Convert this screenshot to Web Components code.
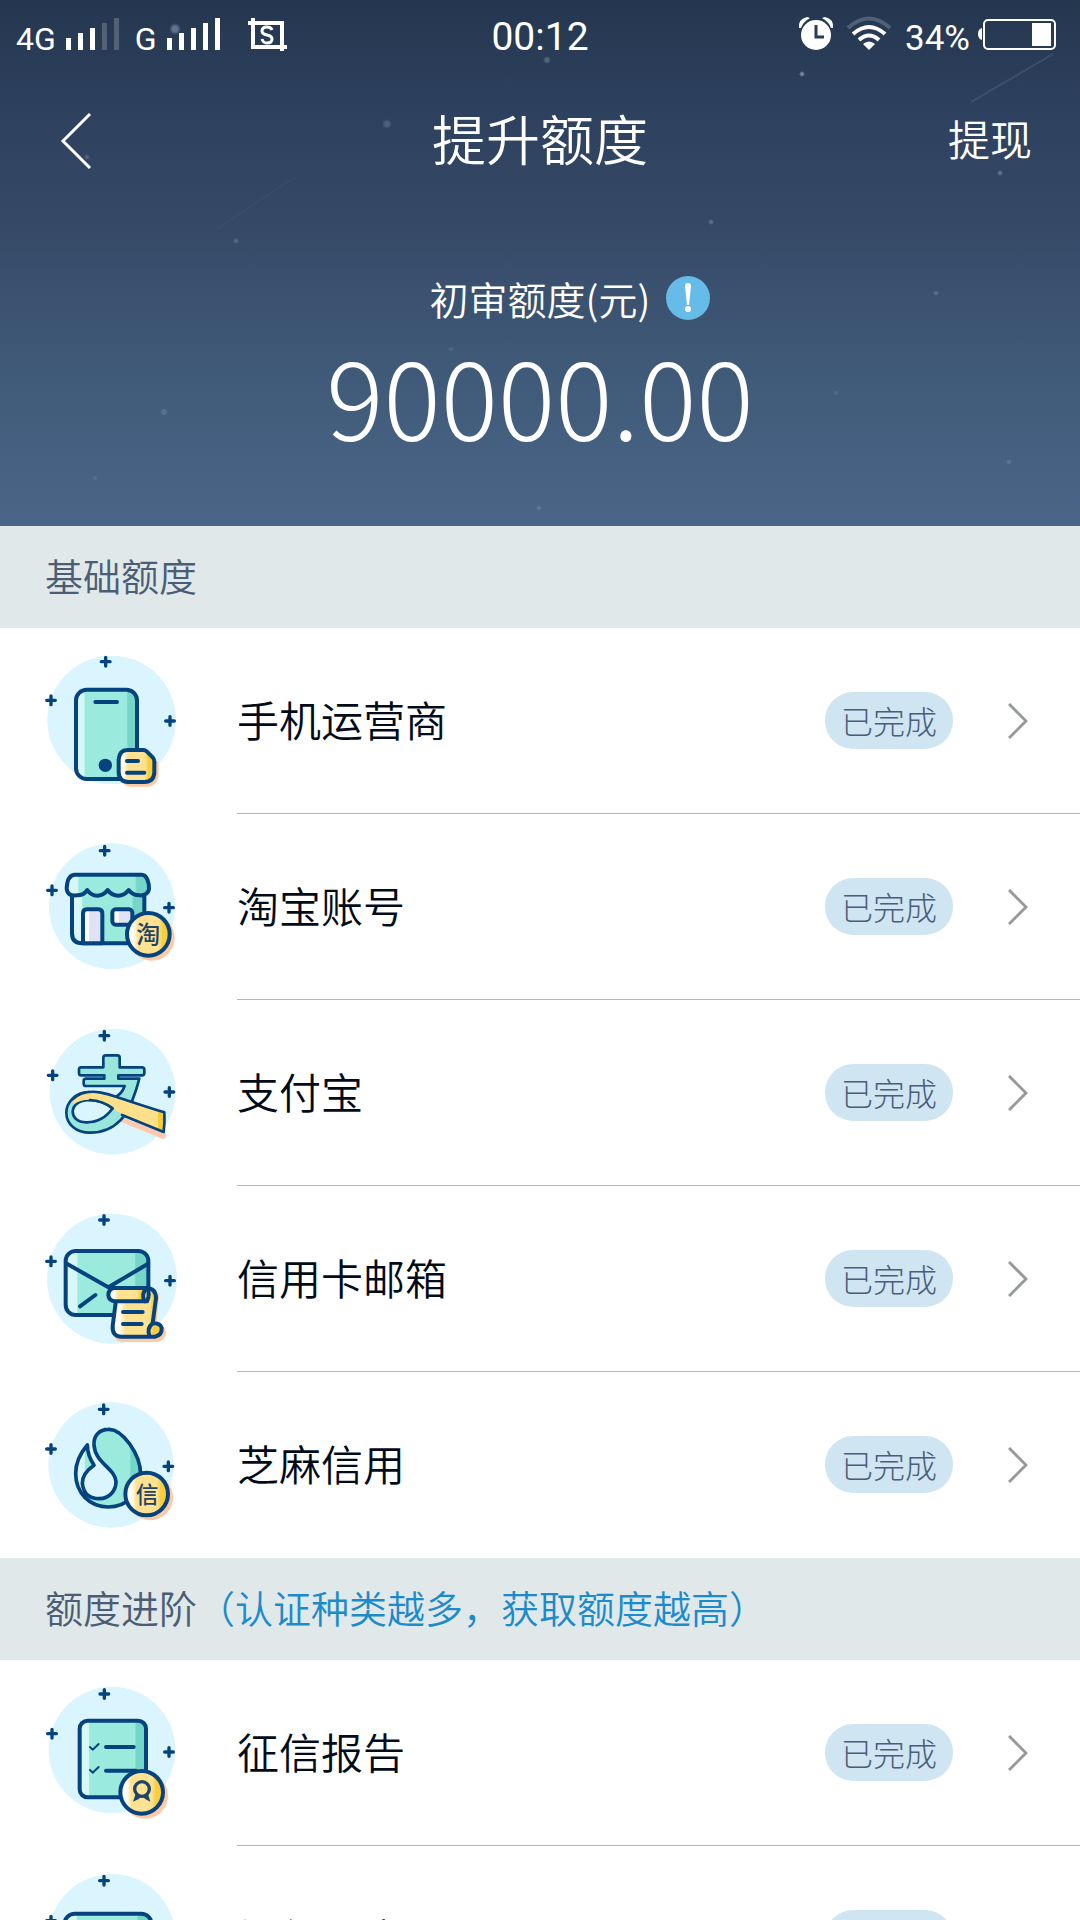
<!DOCTYPE html>
<html lang="zh-CN">
<head>
<meta charset="utf-8">
<meta name="viewport" content="width=device-width, initial-scale=1">
<title>提升额度</title>
<style>
    body {
        margin: 0;
        background: #fff;
        color: #020b18;
        font-family: "Noto Sans CJK SC", sans-serif;
        font-weight: 350;
    }
</style>
</head>
<body>
<quota-app>
    <status-bar slot="top" time="00:12" battery="34%"></status-bar>
    <nav-bar slot="top" heading="提升额度"><a slot="action" href="#withdraw">提现</a></nav-bar>
    <quota-amount slot="top" label="初审额度(元)">90000.00</quota-amount>

    <quota-section heading="基础额度">
        <quota-item icon="phone" status="已完成">手机运营商</quota-item>
        <quota-item icon="shop" status="已完成">淘宝账号</quota-item>
        <quota-item icon="alipay" status="已完成">支付宝</quota-item>
        <quota-item icon="mail" status="已完成">信用卡邮箱</quota-item>
        <quota-item icon="sesame" status="已完成">芝麻信用</quota-item>
    </quota-section>
    <quota-section heading="额度进阶" note="（认证种类越多，获取额度越高）">
        <quota-item icon="report" status="已完成">征信报告</quota-item>
        <quota-item icon="card" status="已完成">银行账户</quota-item>
    </quota-section>
</quota-app>

<script>
// four-armed sparkle around the round icons
const spark = (x, y) => `<path d="M${x - 13} ${y}h26M${x} ${y - 13}v26" stroke-width="10"/>`;

const coin = (x, y, r) => `
    <circle cx="${x + 10}" cy="${y + 10}" r="${r + 5}" fill="#ffc9a3" stroke="none"/>
    <circle cx="${x}" cy="${y}" r="${r}" fill="url(#gold)"/>`;

const ICONS = {
    phone: {
        top: 33, disc: [245, 240, 193],
        sparks: [[227, 65], [63, 181], [420, 243]],
        art: `
            <rect x="138" y="149" width="183" height="268" rx="32" fill="url(#mint)"/>
            <path d="M196 186h65"/>
            <circle cx="226" cy="376" r="20" fill="#05437f" stroke="none"/>
            <path d="M302 336h42l42 32v36q-2 34-34 36h-50q-26 0-28-28z" fill="#ffc9a3" stroke="none"/>
            <path d="M292 330h48q6 0 10 4l18 18q5 5 5 12v34q-2 28-30 28h-49q-28-2-28-30v-38q2-27 26-28z" fill="url(#gold)"/>
            <path d="M291 363h33M291 398h52"/>`
    },
    shop: {
        top: 21, disc: [246, 229, 189],
        sparks: [[224, 62], [66, 181], [417, 233]],
        art: `
            <path d="M126 170v140q0 30 30 30h187V170z" fill="url(#mint)"/>
            <path d="M159 340v-90q0-12 12-12h34q12 0 12 12v90z" fill="url(#glass)"/>
            <rect x="247" y="238" width="60" height="46" rx="10" fill="url(#glass)"/>
            <path d="M135 134h200c16 0 23 26 22 44q-5 20-29 18-20 0-32-16-13 17-31 17-20 0-32-17-13 17-31 17-19 0-30-17-12 17-32 16-28 4-30-21 2-41 25-41z" fill="url(#mint)"/>
            ${coin(355, 313, 64)}
            <text x="355" y="340" font-size="72">淘</text>`
    },
    alipay: {
        top: 24, disc: [248, 230, 189],
        sparks: [[223, 62], [68, 181], [418, 231]],
        art: `
            <g stroke-width="8">
            <path d="M262 303l146 50v12q-3 9-12 6l-128-52z" fill="#ffc9b0" stroke="none"/>
            <path d="M228 121h34q7 0 7 7v29h67q7 0 7 7v10q0 7-7 7h-71v10h63C321 219 300 290 270 317 248 340 215 353 180 353c-42 0-71-26-71-60 0-30 27-62 67-62l75 17Q275 240 284 213H168q-7 0-7-7v-8q0-7 7-7h55v-10h-70q-6 0-6-7v-10q0-7 6-7h67v-29q0-7 8-7z" fill="#98e6dc"/>
            <path d="M248 280c-20 28-50 43-80 42-27 0-40-15-40-33 2-22 24-34 52-34 28 1 50 11 68 25z" fill="#daf5fd"/>
            <path d="M128 253c20-19 50-27 85-20 15 3 30 7 45 12 48 16 92 31 145 47q2 30-2 59L288 304c-30-16-50-32-78-43-28-11-58-8-78 7z" fill="#ffe08a" stroke="none"/>
            <path d="M384 287l19 5q2 30-2 59l-17-7z" fill="#f6cb35" stroke="none"/>
            <path d="M128 253c20-19 50-27 85-20 15 3 30 7 45 12 48 16 92 31 145 47q2 30-2 59L276 300M248 280c-18-14-40-24-68-25"/>
            </g>`
    },
    mail: {
        top: 27, disc: [246, 236, 195],
        sparks: [[222, 60], [63, 184], [420, 242]],
        art: `
            <rect x="107" y="153" width="248" height="192" rx="30" fill="url(#mint)"/>
            <path d="M112 192l123 70 118-70M150 319l46-34"/>
            <path d="M272 408l116-130-8 92q26 4 28 28-2 24-28 28H278q-20-2-24-14z" fill="#ffc9a3" stroke="none"/>
            <path d="M258 300l-10 78q-2 32 27 32h100q21-4 20-26-5-16-27-14l10-75q0-30-28-31z" fill="url(#gold)"/>
            <path d="M350 264h-98q-17 3-17 22 2 18 22 18h88q-14-20 5-40z" fill="url(#gold)"/>
            <path d="M350 264q12 16 1 40h-8M368 370q-18 14-10 38M279 336h59M279 372h56"/>`
    },
    sesame: {
        top: 15, disc: [243, 225, 188],
        sparks: [[221, 58], [63, 177], [415, 229]],
        art: `
            <path d="M235 118c40-2 97 72 97 137 0 55-42 96-97 96s-98-41-98-101c0-35 18-65 35-85q0 30 20 61-35 24-35 54c3 30 23 46 51 46 32-1 50-26 50-51-2-40-63-55-66-110-2-30 18-47 43-47z" fill="url(#mint)" stroke-width="11"/>
            ${coin(350, 312, 64)}
            <text x="351" y="338" font-size="68">信</text>`
    },
    report: {
        top: 39, disc: [246, 240, 190],
        sparks: [[223, 72], [66, 191], [417, 246]],
        art: `
            <rect x="149" y="152" width="199" height="230" rx="24" fill="url(#mint)"/>
            <path d="M180 231l8 8 18-17M180 300l8 8 18-17" stroke-width="6"/>
            <path d="M228 231h83M228 302h90"/>
            ${coin(335, 367, 64)}
            <circle cx="336" cy="357" r="22" stroke-width="10" stroke="#1c4468"/>
            <path d="M317 372l-8 23 16-7 11-9 11 9 14 7-7-23-18 9z" fill="#1c4468" stroke="none"/>`
    },
    card: {
        top: 597, disc: [246, 802, 190],
        sparks: [[222, 632], [63, 752], [418, 808]],
        art: `
            <rect x="104" y="731" width="260" height="190" rx="30" fill="url(#mint)"/>
            <path d="M104 785h260"/>`
    }
};

const DEFS = `
    <defs>
        <linearGradient id="mint">
            <stop offset=".13" stop-color="#d9f7f9"/><stop offset=".15" stop-color="#9aebde"/>
            <stop offset=".83" stop-color="#9aebde"/><stop offset=".85" stop-color="#74d6c6"/>
        </linearGradient>
        <linearGradient id="gold">
            <stop offset=".14" stop-color="#fff"/><stop offset=".26" stop-color="#ffe192"/>
            <stop offset=".74" stop-color="#ffe192"/><stop offset=".84" stop-color="#f9cd3c"/>
        </linearGradient>
        <linearGradient id="glass">
            <stop offset=".3" stop-color="#fff"/><stop offset=".34" stop-color="#dfe3f5"/>
        </linearGradient>
    </defs>`;

class QuotaIcon extends HTMLElement {
    constructor() {
        super();
        this.attachShadow({mode: 'open'});
    }

    connectedCallback() {
        const icon = ICONS[this.getAttribute('name')];
        const [cx, cy, r] = icon.disc;
        this.shadowRoot.innerHTML = `
<style>
    :host { display: block; width: 140px; height: 140px; }
    svg { display: block; width: 100%; height: 100%; overflow: visible; }
    text { fill: #1c4468; stroke: none; text-anchor: middle; font-weight: 500; }
</style>
<svg viewBox="30 ${icon.top} 420 420" fill="none" stroke="#05437f" stroke-width="12" stroke-linecap="round" stroke-linejoin="round" aria-hidden="true">
    ${DEFS}
    <circle cx="${cx}" cy="${cy}" r="${r}" fill="#daf5fd" stroke="none"/>
    ${icon.sparks.map(([x, y]) => spark(x, y)).join('')}
    ${icon.art}
</svg>`;
    }
}

class StatusBar extends HTMLElement {
    constructor() {
        super();
        this.attachShadow({mode: 'open'});
    }

    // five growing bars, the ones past `level` are dimmed
    signal(level) {
        const bars = [12, 17, 22, 27, 32].map((h, i) =>
            `<rect x="${i * 12}" y="${34 - h}" width="5" height="${h}" opacity="${i < level ? 1 : 0.2}"/>`);
        return `<svg width="53" height="34" fill="#fff" aria-hidden="true">${bars.join('')}</svg>`;
    }

    connectedCallback() {
        this.shadowRoot.innerHTML = `
<style>
    :host {
        display: grid;
        grid-template-columns: 1fr auto 1fr;
        align-items: baseline;
        box-sizing: border-box;
        height: 72px;
        padding: 13px 16px 0;
        line-height: 48px;
        font-family: Roboto, sans-serif;
        font-weight: 400;
    }
    div { display: flex; align-items: baseline; }
    svg { overflow: visible; flex: none; }
    .net { font-size: 32px; gap: 10px; }
    .net span + svg + span { margin-left: 6px; }
    .shot { margin-left: 18px; }
    .time { font-size: 39px; }
    .right { justify-content: flex-end; font-size: 35px; gap: 14px; padding-right: 8px; }
    .battery { margin-left: -6px; }
</style>
<div class="net">
    <span>4G</span>${this.signal(3)}
    <span>G</span>${this.signal(5)}
    <svg class="shot" width="39" height="34" fill="none" stroke="#fff" aria-hidden="true">
        <path d="M0 7h34v28M5 2v29h34" stroke-width="4"/>
        <path d="M24 14q-1-3-5-3-5 0-5 4 0 3 5 4t5 4q0 4-5 4-4 0-5-4" stroke-width="3"/>
    </svg>
</div>
<span class="time">${this.getAttribute('time')}</span>
<div class="right">
    <svg width="34" height="34" aria-hidden="true">
        <path d="M0 12Q-1 3 8 1l3 1Q4 6 2 12zM34 12q1-9-8-11l-3 1q7 4 9 10z" fill="#fff"/>
        <circle cx="17" cy="19" r="15" fill="#fff"/>
        <path d="M17 9v12h8" fill="none" stroke="#293c55" stroke-width="3"/>
    </svg>
    <svg width="44" height="34" fill="none" stroke="#fff" stroke-width="4" aria-hidden="true">
        <path d="M1 12q21-19 42 0" opacity=".2"/>
        <path d="M6 18q16-14 32 0M12 24q10-9 20 0"/>
        <path d="M22 34l-6-6q6-5 12 0z" fill="#fff" stroke="none"/>
    </svg>
    <span>${this.getAttribute('battery')}</span>
    <svg class="battery" width="78" height="34" aria-hidden="true">
        <path d="M4 12v12q-4-1-4-6t4-6z" fill="#fff"/>
        <rect x="6" y="4" width="71" height="29" rx="4" fill="none" stroke="#fff" stroke-width="2"/>
        <path d="M54 7h19v23H54z" fill="#fff"/>
    </svg>
</div>`;
    }
}

class NavBar extends HTMLElement {
    constructor() {
        super();
        this.attachShadow({mode: 'open'});
    }

    connectedCallback() {
        this.shadowRoot.innerHTML = `
<style>
    :host {
        display: grid;
        grid-template-columns: 1fr auto 1fr;
        align-items: center;
        padding: 0 48px;
        height: 138px;
    }
    button {
        justify-self: start;
        padding: 12px;
        border: none;
        background: none;
        cursor: pointer;
    }
    svg { display: block; }
    h1 { margin: 0; padding-bottom: 8px; font-size: 54px; font-weight: inherit; }
    ::slotted(a) {
        justify-self: end;
        padding-bottom: 8px;
        font-size: 42px;
        color: inherit;
        text-decoration: none;
    }
</style>
<button type="button" aria-label="返回">
    <svg width="32" height="56" fill="none" stroke="#fff" stroke-width="3"><path d="M30 1L3 28l27 27"/></svg>
</button>
<h1>${this.getAttribute('heading')}</h1>
<slot name="action"></slot>`;
    }
}

class QuotaAmount extends HTMLElement {
    constructor() {
        super();
        this.attachShadow({mode: 'open'});
    }

    connectedCallback() {
        this.shadowRoot.innerHTML = `
<style>
    :host { display: block; padding: 60px 0 62px; text-align: center; }
    .label {
        display: grid;
        grid-template-columns: 1fr auto 1fr;
        align-items: center;
        column-gap: 16px;
        font-size: 39px;
        line-height: 56px;
    }
    .label span { grid-column: 2; }
    button {
        justify-self: start;
        padding: 0;
        border: none;
        background: none;
        cursor: pointer;
    }
    svg { display: block; }
    .value { font-size: 107px; font-weight: 300; line-height: 138px; }
</style>
<div class="label">
    <span>${this.getAttribute('label')}</span>
    <button type="button" aria-label="额度说明">
        <svg width="44" height="44" fill="#fff">
            <circle cx="22" cy="22" r="22" fill="#66bbe8"/>
            <path d="M19 10q0-3 3-3t3 3l-2 19h-2z"/>
            <circle cx="22" cy="33" r="3"/>
        </svg>
    </button>
</div>
<div class="value"><slot></slot></div>`;
    }
}

class QuotaSection extends HTMLElement {
    constructor() {
        super();
        this.attachShadow({mode: 'open'});
    }

    connectedCallback() {
        this.shadowRoot.innerHTML = `
<style>
    :host { display: block; }
    h2 {
        margin: 0;
        padding: 0 45px 4px;
        background: #e1e8ea;
        color: #4a5d75;
        font-size: 38px;
        font-weight: inherit;
        line-height: 98px;
    }
    span { color: #1c8bcb; }
    ::slotted(:last-child) { --divider: transparent; }
</style>
<h2>${this.getAttribute('heading')}<span>${this.getAttribute('note') || ''}</span></h2>
<slot></slot>`;
    }
}

class QuotaItem extends HTMLElement {
    constructor() {
        super();
        this.attachShadow({mode: 'open'});
    }

    connectedCallback() {
        this.shadowRoot.innerHTML = `
<style>
    :host { display: block; }
    a {
        display: flex;
        align-items: center;
        gap: 57px;
        padding-left: 40px;
        color: inherit;
        text-decoration: none;
    }
    quota-icon { flex: none; }
    .body {
        flex: 1;
        display: flex;
        align-items: center;
        gap: 55px;
        height: 185px;
        padding-right: 52px;
        border-bottom: 1px solid var(--divider, #b4b8ba);
    }
    .name { flex: 1; padding-bottom: 4px; font-size: 42px; }
    .status {
        padding: 0 16px;
        border-radius: 28px;
        background: #cfe6f2;
        color: #4a5d7b;
        font-size: 32px;
        font-weight: 300;
        line-height: 57px;
    }
    svg { display: block; flex: none; }
</style>
<a href="#${this.getAttribute('icon')}">
    <quota-icon name="${this.getAttribute('icon')}"></quota-icon>
    <div class="body">
        <span class="name"><slot></slot></span>
        <span class="status">${this.getAttribute('status')}</span>
        <svg width="20" height="36" fill="none" stroke="#979a9b" stroke-width="3" aria-hidden="true"><path d="M1 1l17 17L1 35"/></svg>
    </div>
</a>`;
    }
}

class QuotaApp extends HTMLElement {
    constructor() {
        super();
        this.attachShadow({mode: 'open'});
        this.render();
    }

    render() {
        // x, y, radius, opacity
        const stars = [
            [175, 29, 6, .35], [387, 124, 5, .2], [547, 60, 4, .25], [802, 74, 3, .45],
            [1000, 173, 3, .3], [711, 222, 3, .25], [936, 293, 3, .2], [236, 241, 3, .2],
            [164, 412, 4, .15], [836, 393, 3, .1], [1009, 462, 3, .15], [451, 349, 3, .1],
            [539, 508, 3, .15], [95, 478, 3, .1], [87, 157, 3, .2]
        ];
        this.shadowRoot.innerHTML = `
<style>
    :host { display: block; height: 100vh; overflow: hidden auto; scrollbar-width: none; }
    header {
        position: relative;
        color: #fff;
        background: linear-gradient(#25374f, #2d405d 20%, #364a68 44%, #405b79 72%, #4a6587);
    }
    .sky { position: absolute; inset: 0; width: 100%; height: 100%; }
    .content { position: relative; }
</style>
<header>
    <svg class="sky" viewBox="0 0 1080 526" preserveAspectRatio="xMidYMin slice" aria-hidden="true">
        <defs><radialGradient id="glow"><stop offset=".4" stop-color="#cfe0f2"/><stop offset="1" stop-color="#cfe0f2" stop-opacity="0"/></radialGradient></defs>
        ${stars.map(([x, y, r, o]) => `<circle cx="${x}" cy="${y}" r="${r}" fill="url(#glow)" opacity="${o}"/>`).join('')}
        <path d="M971 102l82-48" stroke="#9fb4cc" stroke-width="2" opacity=".15"/>
        <path d="M217 229l78-52" stroke="#9fb4cc" stroke-width="2" opacity=".04"/>
    </svg>
    <div class="content"><slot name="top"></slot></div>
</header>
<main><slot></slot></main>`;
    }
}

customElements.define('quota-icon', QuotaIcon);
customElements.define('status-bar', StatusBar);
customElements.define('nav-bar', NavBar);
customElements.define('quota-amount', QuotaAmount);
customElements.define('quota-section', QuotaSection);
customElements.define('quota-item', QuotaItem);
customElements.define('quota-app', QuotaApp);
</script>
</body>
</html>
